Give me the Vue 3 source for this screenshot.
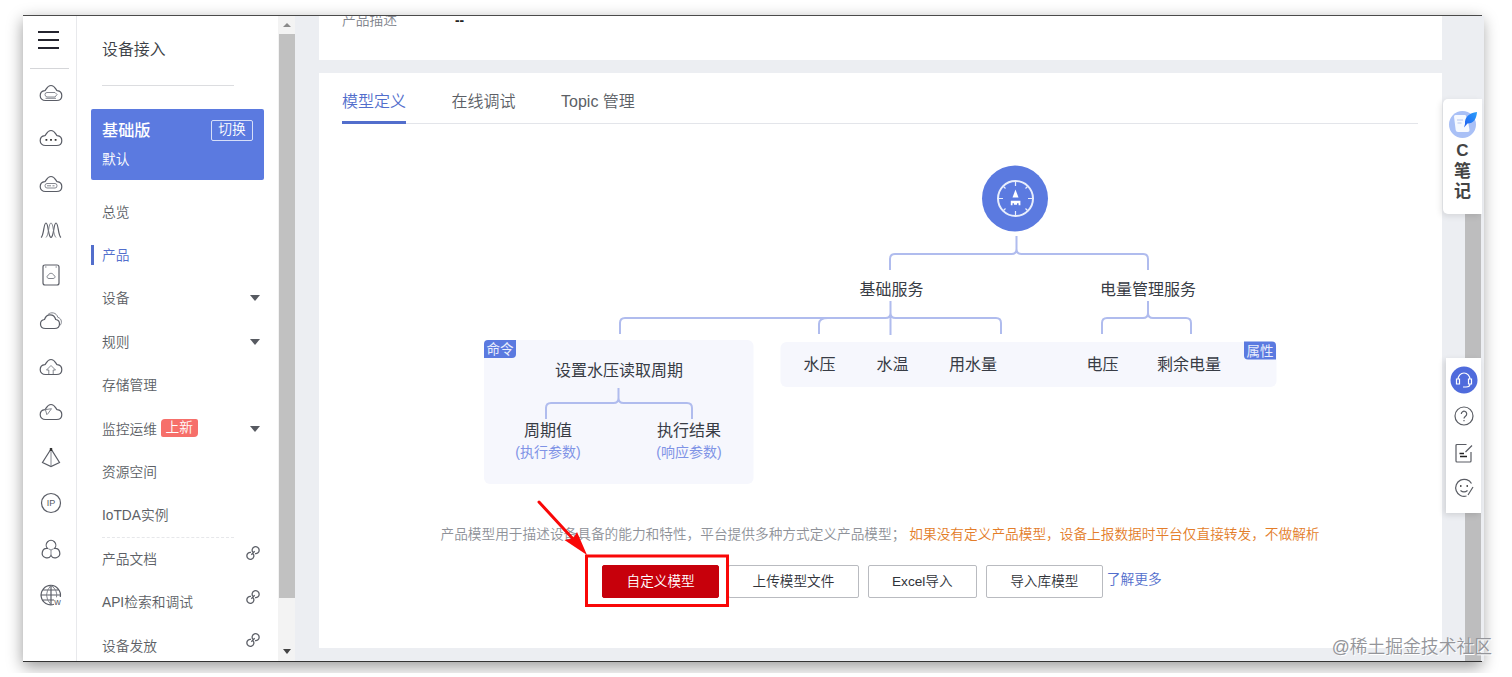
<template>
	<div class="page">
		<div class="window">
			<nav class="rail">
				<svg class="burger" viewBox="0 0 22 20">
					<path d="M0 2h21M0 10h21M0 18h21" />
				</svg>
				<ul>
					<li v-for="icon in railIcons" :key="icon.name">
						<svg class="icon" viewBox="0 0 24 24">
							<path :d="icon.shape" />
							<path v-if="icon.detail" class="thin" :d="icon.detail" />
							<path v-if="icon.dots" class="dots" :d="icon.dots" />
							<text v-if="icon.text" :x="icon.x" :y="icon.y" :font-size="icon.size">
								{{ icon.text }}
							</text>
						</svg>
					</li>
				</ul>
			</nav>

			<aside class="sidebar">
				<h1>设备接入</h1>
				<div class="edition">
					<div class="edition-row">
						<strong>基础版</strong>
						<button>切换</button>
					</div>
					<span>默认</span>
				</div>
				<ul class="menu">
					<li
						v-for="item in menu"
						:key="item.title"
						:class="{ active: item.active, divided: item.divided }"
					>
						<span>{{ item.title }}</span>
						<em v-if="item.badge">{{ item.badge }}</em>
						<i v-if="item.children" class="caret"></i>
						<svg v-if="item.link" class="link" viewBox="0 0 16 16">
							<path d="M7.800 7.200A3.500 3.500 0 1 1 10 8.600M8.200 8.800A3.500 3.500 0 1 1 6 7.400M6.300 9.700l3.400-3.400" />
						</svg>
					</li>
				</ul>
			</aside>

			<div class="scrollbar">
				<i class="up"></i>
				<div class="thumb"></div>
				<i class="down"></i>
			</div>

			<main>
				<section class="info">
					<span>产品描述</span>
					<b>--</b>
				</section>

				<section class="model">
					<div class="tabs">
						<a v-for="tab in tabs" :key="tab" :class="{ active: tab === activeTab }" @click="activeTab = tab">{{ tab }}</a>
					</div>

					<svg class="diagram" viewBox="342 124 1076 390">
						<rect class="panel" x="484" y="340" width="269.500" height="144" rx="6" />
						<rect class="panel" x="780.500" y="342" width="496" height="45" rx="6" />

						<g class="lines">
							<path d="M1016.500 236v13q0 5-5 5H895q-5 0-5 5v11M1016.500 249q0 5 5 5H1143q5 0 5 5v11" />
							<path d="M890.500 301v34M890.500 313q0 5-5 5H625q-5 0-5 5v11M890.500 313q0 5 5 5H996q5 0 5 5v11M828 318q-9 0-9 6v10" />
							<path d="M1148 301v12q0 5-5 5h-36q-5 0-5 5v11M1148 313q0 5 5 5h33q5 0 5 5v11" />
							<path d="M618.500 388v10q0 5-5 5H551q-5 0-5 5v11M618.500 398q0 5 5 5H687q5 0 5 5v11" />
						</g>

						<circle class="root" cx="1015" cy="198.500" r="33" />
						<g class="gauge">
							<circle cx="1015.500" cy="198.500" r="17.500" />
							<path class="ticks" d="M1015.500 181v5M1015.500 216v-5M998 198.500h5M1033 198.500h-5M1003.500 186.500l2 2M1027.500 186.500l-2 2M1003.500 210.500l2-2M1027.500 210.500l-2-2" />
							<path class="needle" d="M1015.500 189.500l3 8h-6zM1010.800 200.800h9.600v4.400h-1.800v-2h-1.600v1.500h-3v-1.500h-1.500v2h-1.700z" />
						</g>

						<path class="tag" d="M488 340h28v14q0 4-4 4h-28v-14q0-4 4-4z" />
						<text class="tag-text" x="500" y="354">命令</text>
						<path class="tag" d="M1244 341.500h28q4 0 4 4v14h-28q-4 0-4-4z" />
						<text class="tag-text" x="1260" y="355.500">属性</text>

						<text
							v-for="node in nodes"
							:key="node.label"
							:class="{ sub: node.sub }"
							:x="node.x"
							:y="node.y"
						>{{ node.label }}</text>
					</svg>

					<p class="hint">
						<span>产品模型用于描述设备具备的能力和特性，平台提供多种方式定义产品模型；</span>
						<span class="warn">如果没有定义产品模型，设备上报数据时平台仅直接转发，不做解析</span>
					</p>

					<div class="actions">
						<button class="primary">自定义模型</button>
						<button>上传模型文件</button>
						<button>Excel导入</button>
						<button>导入库模型</button>
						<a>了解更多</a>
					</div>
				</section>
			</main>

			<div class="page-thumb"></div>

			<div class="note">
				<svg viewBox="0 0 28 28">
					<defs>
						<linearGradient id="feather" x1="0" y1="1" x2="1" y2="0">
							<stop offset="0" stop-color="#1f5bf0" />
							<stop offset="1" stop-color="#2ba0fa" />
						</linearGradient>
					</defs>
					<circle cx="13.500" cy="14.500" r="13.500" fill="#a9c0f6" />
					<path d="M5 6.500q0-1.500 1.500-1.500h10l2.500 6 1.500 9q.2 2-2 2H9q-2 0-2.300-2z" fill="#f6f9ff" />
					<path d="M8 10h6M8.500 13h4" stroke="#b9c8ef" fill="none" />
					<path d="M16 14C15.500 7 20 3 28 2c-.5 7-3.500 11.500-9.500 11.500L15 17.500z" fill="url(#feather)" />
				</svg>
				<b>C</b>
				<b>笔</b>
				<b>记</b>
			</div>

			<div class="tools">
				<svg class="service" viewBox="0 0 28 28">
					<circle cx="14" cy="14" r="13.500" />
					<path d="M8 13.500a6 6.500 0 0 1 12 0M6.500 13h3v5h-3zM18.500 13h3v5h-3zM20 18q0 3-4 3M13 21h3" />
				</svg>
				<svg viewBox="0 0 20 20">
					<circle cx="10" cy="10" r="9" />
					<path d="M7.300 8a2.700 2.700 0 1 1 4.200 2.200q-1.500 1-1.500 2.400M10 14v1.300" />
				</svg>
				<svg class="form" viewBox="0 0 20 20">
					<path d="M12.500 1.500H3q-1 0-1 1v15.500q0 1 1 1h13q1 0 1-1V9M18 2.500l-6.500 6.500" />
					<path class="dark" d="M5.500 10.500h4.500M6 13.500h7" />
				</svg>
				<svg viewBox="0 0 20 20">
					<path d="M17.500 5.500A8.500 8.500 0 1 0 12.500 18M19 9l-5 8M6.500 12.500q3.500 2.800 7 0" />
					<path class="dark" d="M6 8h1.500M12.500 8h1.500" />
				</svg>
			</div>

			<svg class="marker" viewBox="530 495 200 115">
				<rect x="586.500" y="556" width="141" height="49.500" />
				<path d="M539 502l35 38" stroke-linecap="round" />
				<path class="head" d="M587 555l-22.500-15 8.500-1.500 4-6.500z" />
			</svg>
		</div>

		<div class="watermark">@稀土掘金技术社区</div>
	</div>
</template>

<script setup>
import { ref } from 'vue';

const cloud =
	'M6.500 19.500C3.300 19.500 1.200 17.500 1.200 14.700C1.200 12 3 10 5.800 9.700C7.200 8.800 8 4.500 12 4.500C16 4.500 16.800 8.800 18.200 9.700C21 10 22.800 12 22.800 14.700C22.800 17.500 20.700 19.500 17.500 19.500Z';

const railIcons = [
	{ name: 'host', shape: cloud, detail: 'M8 11.500h8l2 2-2 2.500H8q-2-.5-2-2.500T8 11.500zM6.500 17.300h10.500' },
	{ name: 'more', shape: cloud, dots: 'M6.500 13h1.800v1.800h-1.800zM11.100 13h1.800v1.800h-1.800zM15.700 13h1.800v1.800h-1.800z' },
	{ name: 'bare', shape: cloud, detail: 'M8 11.500h8q2 0 2 2.300T16 16H8q-2 0-2-2.200t2-2.300zM8 13.800h4M13.500 13.800h2' },
	{ name: 'wave', shape: 'M2 19.500C5 18 4.500 5 7 5s2 14 5 14.500C15 19 14.500 5 17 5s2 13 5 14.500', detail: 'M7 19.500C10 17 9.500 5 12 5s2 12 5 14.500' },
	{ name: 'disk', shape: 'M6 2h12q2 0 2 2v16q0 2-2 2H6q-2 0-2-2V4q0-2 2-2z', detail: 'M10 15.500c-2.500 0-2.500-3-.6-3.300.6-2.500 4.600-2.500 5.200 0 2 .3 2 3.300-.6 3.300zM6 4h1.500M16.500 4H18' },
	{ name: 'clouds', shape: 'M6.500 19.500C3 19.500 1.500 17.500 1.500 15C1.500 12.500 3 10.800 5.500 10.500C6.500 7.500 8.500 5.800 11 5.800C14 5.800 16 7.500 16.700 10.500C19 10.800 20.500 12.500 20.500 15C20.500 17.500 19 19.500 15.500 19.500Z', detail: 'M9 5.500c3-3 8.500-2 9.800 2.800 4.200 1.200 4.700 6.200 1.700 8.500' },
	{ name: 'upload', shape: cloud, detail: 'M9.800 19v-4H7.500l4.500-4.500 4.500 4.500h-2.300v4' },
	{ name: 'edge', shape: cloud, detail: 'M6 9.700l6.500-1-4 5.500M6.500 10l1.500 5' },
	{ name: 'pyramid', shape: 'M12 3L3.500 16.500 12 20.500 20.500 16.500z', detail: 'M12 3v17.500', dots: 'M10.800 2h2.400v3h-2.400z' },
	{ name: 'ip', shape: 'M12 2.500a9.500 9.500 0 1 1 0 19 9.500 9.500 0 1 1 0-19z', text: 'IP', x: 12, y: 15, size: 9 },
	{ name: 'cluster', shape: 'M8.500 11.500A4.800 4.800 0 1 1 15.500 11.500A4.700 4.700 0 1 1 12 18.500A4.700 4.700 0 1 1 8.500 11.500z', detail: 'M12 13v5.500M12 13l-2-1M12 13l2-1' },
	{ name: 'web', shape: 'M21.300 14A9.700 9.700 0 1 0 15 21.300M2.500 12h19M4 7h16M4 17h11M12 2.300v19.400', detail: 'M12 2.300q-9 9.700 0 19.400M12 2.300q7 5 5.500 12', text: 'w', x: 18.5, y: 21.5, size: 9 },
];

const menu = [
	{ title: '总览' },
	{ title: '产品', active: true },
	{ title: '设备', children: true },
	{ title: '规则', children: true },
	{ title: '存储管理' },
	{ title: '监控运维', badge: '上新', children: true },
	{ title: '资源空间' },
	{ title: 'IoTDA实例' },
	{ title: '产品文档', link: true, divided: true },
	{ title: 'API检索和调试', link: true },
	{ title: '设备发放', link: true },
];

const tabs = ['模型定义', '在线调试', 'Topic 管理'];
const activeTab = ref('模型定义');

const nodes = [
	{ label: '基础服务', x: 891.5, y: 295 },
	{ label: '电量管理服务', x: 1148, y: 295 },
	{ label: '设置水压读取周期', x: 619, y: 376 },
	{ label: '周期值', x: 548, y: 436 },
	{ label: '执行结果', x: 689, y: 436 },
	{ label: '(执行参数)', x: 548, y: 457, sub: true },
	{ label: '(响应参数)', x: 689, y: 457, sub: true },
	{ label: '水压', x: 819.5, y: 370 },
	{ label: '水温', x: 892.5, y: 370 },
	{ label: '用水量', x: 973, y: 370 },
	{ label: '电压', x: 1102.5, y: 370 },
	{ label: '剩余电量', x: 1189, y: 370 },
];
</script>

<style>
body {
	background: #fff;
}
</style>

<style scoped>
* {
	box-sizing: border-box;
	margin: 0;
	padding: 0;
}

.page {
	position: relative;
	width: 1512px;
	height: 673px;
	padding: 15px 0 0 23px;
	overflow: hidden;
	background: #fff;
	font-family: 'Liberation Sans', 'Noto Sans CJK SC', sans-serif;
	font-size: 13.75px;
	font-weight: 350;
	color: #5c5f66;
}

.window {
	position: relative;
	display: flex;
	width: 1459px;
	height: 647px;
	border-top: 1px solid #4a4a4a;
	border-bottom: 1px solid #333;
	background: #fff;
	box-shadow: 0 5px 15px rgba(0, 0, 0, 0.4);
}

ul {
	list-style: none;
}

button {
	font: inherit;
	white-space: nowrap;
}

svg {
	fill: none;
	flex-shrink: 0;
}

/* icon rail */
.rail {
	width: 54px;
	flex-shrink: 0;
	border-right: 1px solid #e8e9ec;
	padding-top: 14px;
}

.burger {
	display: block;
	width: 22px;
	height: 20px;
	margin-left: 15px;
	stroke: #24242e;
	stroke-width: 2;
}

.rail ul {
	margin: 18px 7px 0;
	border-top: 1px solid #d5d6d9;
}

.rail li {
	height: 45.64px;
	display: flex;
	align-items: center;
	padding-left: 9px;
}

.rail ul li:first-child {
	margin-top: 1px;
}

.icon {
	width: 24px;
	height: 24px;
	stroke: #5a5d66;
	stroke-width: 1.2;
}

.icon .thin {
	stroke: #777a83;
	stroke-width: 0.9;
}

.icon .dots {
	fill: #333;
	stroke: none;
}

.icon text {
	fill: #555963;
	stroke: none;
	text-anchor: middle;
}

/* sidebar */
.sidebar {
	width: 201px;
	flex-shrink: 0;
	overflow: hidden;
}

h1 {
	width: 132px;
	height: 70px;
	margin-left: 25px;
	border-bottom: 1px solid #dcdde0;
	line-height: 67px;
	font-size: 15.9px;
	font-weight: 350;
	color: #3b3e45;
}

.edition {
	width: 173px;
	height: 71px;
	margin: 22.5px 0 10.5px 14px;
	padding: 10px 11px;
	border-radius: 2px;
	background: #5b7ae0;
	color: #fff;
}

.edition-row {
	display: flex;
	justify-content: space-between;
	align-items: center;
	height: 23px;
	margin-bottom: 6px;
}

.edition strong {
	font-size: 16.2px;
	font-weight: 500;
	line-height: 20px;
}

.edition button {
	width: 42px;
	height: 21px;
	border: 1px solid #d6def8;
	border-radius: 2px;
	background: none;
	color: #fff;
	line-height: 18px;
}

.edition span {
	display: block;
	line-height: 23px;
}

.menu li {
	height: 43.4px;
	display: flex;
	align-items: center;
	padding: 0 18px 0 25px;
	position: relative;
}

.menu span {
	margin-top: -2px;
}

.menu .active {
	color: #526ecc;
}

.menu .active::before {
	content: '';
	width: 3px;
	height: 20px;
	margin: 0 8px 0 -11px;
	background: #526ecc;
}

.menu .divided::before {
	content: '';
	position: absolute;
	top: 0;
	left: 25px;
	width: 132px;
	border-top: 1px dashed #e6e7ea;
}

.menu em {
	height: 18px;
	margin: -2px 0 0 4px;
	padding: 0 4.5px;
	border-radius: 4px 2px 4px 2px;
	background: #f66f6a;
	color: #fff;
	font-style: normal;
	line-height: 17px;
}

.caret {
	margin-left: auto;
	border: 5px solid transparent;
	border-top: 6px solid #575a61;
	border-bottom: 0;
}

.link {
	width: 16px;
	height: 16px;
	margin: -11px -1px 0 auto;
	stroke: #5d6068;
	stroke-width: 1.3;
}

.scrollbar {
	width: 17px;
	flex-shrink: 0;
	display: flex;
	flex-direction: column;
	align-items: center;
	background: #f3f3f3;
}

.scrollbar i {
	border: 4.5px solid transparent;
}

.scrollbar .up {
	margin: 7px 0 7px;
	border-top: 0;
	border-bottom: 4.5px solid #8a8a8a;
}

.scrollbar .thumb {
	width: 16px;
	height: 564px;
	background: #c1c1c1;
}

.scrollbar .down {
	margin-top: auto;
	margin-bottom: 7px;
	border-top: 5px solid #444;
	border-bottom: 0;
}

/* content */
main {
	flex: 1;
	padding: 0 42px 0 24px;
	background: #eceef2;
}

.info {
	height: 44px;
	display: flex;
	gap: 58px;
	padding-left: 23px;
	background: #fff;
	overflow: hidden;
	line-height: 20px;
	color: #80838b;
}

.info span,
.info b {
	margin-top: -5px;
}

.info b {
	font-weight: 700;
	color: #222;
}

.model {
	height: 575px;
	margin-top: 13px;
	padding: 0 24px 0 23px;
	background: #fff;
}

.tabs {
	display: flex;
	gap: 45.5px;
	height: 51px;
	border-bottom: 1px solid #e3e5ea;
	font-size: 16px;
	line-height: 57px;
}

.tabs a {
	height: 51px;
	cursor: pointer;
}

.tabs .active {
	color: #526ecc;
	border-bottom: 3px solid #526ecc;
}

.diagram {
	display: block;
	width: 1076px;
	height: 390px;
}

.panel {
	fill: #f6f7fd;
}

.lines {
	stroke: #b0bcee;
	stroke-width: 2;
}

.root,
.tag {
	fill: #5b7ae0;
}

.gauge {
	stroke: #e8eefc;
	stroke-width: 2;
}

.gauge .ticks {
	stroke-width: 1.2;
}

.gauge .needle {
	fill: #fff;
	stroke: none;
}

.diagram text {
	fill: #383c45;
	font-size: 16px;
	font-weight: 400;
	text-anchor: middle;
}

.diagram .sub {
	fill: #7f93e6;
	font-size: 14px;
}

.diagram .tag-text {
	fill: #e9edfc;
	font-size: 13.5px;
}

.hint {
	display: flex;
	justify-content: center;
	gap: 4px;
	height: 40px;
	line-height: 41px;
	white-space: nowrap;
	color: #8e9198;
	font-size: 13.68px;
}

.warn {
	color: #e37d29;
}

.actions {
	display: flex;
	gap: 9px;
	margin: 11px 0 0 260px;
	line-height: 30px;
}

.actions button {
	height: 33px;
	padding: 0 23.3px;
	border: 1px solid #b9bbc0;
	border-radius: 2px;
	background: #fff;
	color: #30333a;
	font-size: 13.65px;
	line-height: 29px;
}

.actions .primary {
	padding: 0 23.5px;
	border-color: #c7000b;
	background: #c7000b;
	color: #fff;
}

.actions a {
	margin-left: -5px;
	color: #526ecc;
}

/* floating pieces over the page */
.page-thumb {
	position: absolute;
	top: 150px;
	right: 1px;
	bottom: 0;
	width: 16px;
	background: #bdbdbe;
}

.note {
	position: absolute;
	top: 83px;
	right: 0;
	width: 39px;
	height: 115px;
	display: flex;
	flex-direction: column;
	align-items: center;
	padding-top: 11px;
	border-radius: 5px 0 0 5px;
	background: #fff;
	box-shadow: -2px 2px 6px rgba(0, 0, 0, 0.1);
	color: #444;
	font-size: 17px;
	line-height: 20.5px;
}

.note b {
	font-weight: 700;
}

.note svg {
	width: 28px;
	height: 28px;
	margin-bottom: 3px;
}

.tools {
	position: absolute;
	top: 342px;
	right: 1px;
	width: 35px;
	height: 155px;
	display: flex;
	flex-direction: column;
	align-items: center;
	padding-top: 8px;
	background: #fff;
	box-shadow: -2px 2px 6px rgba(0, 0, 0, 0.12);
}

.tools svg {
	width: 20px;
	height: 20px;
	margin-bottom: 16px;
	stroke: #5a5d64;
	stroke-width: 1.2;
}

.tools .service {
	width: 28px;
	height: 28px;
	margin-bottom: 12px;
	stroke: #fff;
}

.tools .form {
	margin: 1px 0 15px;
}

.tools .service circle {
	fill: #4f6bdc;
	stroke: none;
}

.tools .dark {
	stroke: #222;
	stroke-width: 1.6;
}

.marker {
	position: absolute;
	left: 507px;
	top: 479px;
	width: 200px;
	height: 115px;
	stroke: #f90707;
	stroke-width: 3;
	pointer-events: none;
}

.marker .head {
	fill: #f90707;
	stroke: none;
}

.watermark {
	position: absolute;
	right: 20px;
	top: 633px;
	font-size: 17.8px;
	line-height: 28px;
	color: #94959a;
	text-shadow: 1px 1px 0 #fff;
}
</style>
